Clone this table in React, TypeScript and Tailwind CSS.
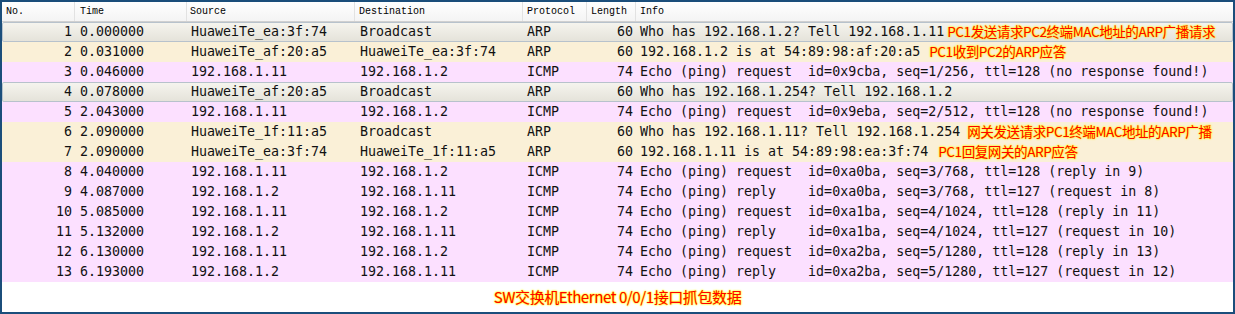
import React from "react";

type Row = {
  no: number;
  time: string;
  src: string;
  dst: string;
  proto: string;
  len: number;
  info: string;
  kind: "sel" | "arp" | "icmp";
  note?: string;
  gap?: string;
};

const rows: Row[] = [
  { no: 1, time: "0.000000", src: "HuaweiTe_ea:3f:74", dst: "Broadcast", proto: "ARP", len: 60, info: "Who has 192.168.1.2? Tell 192.168.1.11", kind: "sel", note: "PC1发送请求PC2终端MAC地址的ARP广播请求", gap: "ml-[3px]" },
  { no: 2, time: "0.031000", src: "HuaweiTe_af:20:a5", dst: "HuaweiTe_ea:3f:74", proto: "ARP", len: 60, info: "192.168.1.2 is at 54:89:98:af:20:a5", kind: "arp", note: "PC1收到PC2的ARP应答", gap: "ml-[9px]" },
  { no: 3, time: "0.046000", src: "192.168.1.11", dst: "192.168.1.2", proto: "ICMP", len: 74, info: "Echo (ping) request  id=0x9cba, seq=1/256, ttl=128 (no response found!)", kind: "icmp" },
  { no: 4, time: "0.078000", src: "HuaweiTe_af:20:a5", dst: "Broadcast", proto: "ARP", len: 60, info: "Who has 192.168.1.254? Tell 192.168.1.2", kind: "sel" },
  { no: 5, time: "2.043000", src: "192.168.1.11", dst: "192.168.1.2", proto: "ICMP", len: 74, info: "Echo (ping) request  id=0x9eba, seq=2/512, ttl=128 (no response found!)", kind: "icmp" },
  { no: 6, time: "2.090000", src: "HuaweiTe_1f:11:a5", dst: "Broadcast", proto: "ARP", len: 60, info: "Who has 192.168.1.11? Tell 192.168.1.254", kind: "arp", note: "网关发送请求PC1终端MAC地址的ARP广播", gap: "ml-[7px]" },
  { no: 7, time: "2.090000", src: "HuaweiTe_ea:3f:74", dst: "HuaweiTe_1f:11:a5", proto: "ARP", len: 60, info: "192.168.1.11 is at 54:89:98:ea:3f:74", kind: "arp", note: "PC1回复网关的ARP应答", gap: "ml-[10px]" },
  { no: 8, time: "4.040000", src: "192.168.1.11", dst: "192.168.1.2", proto: "ICMP", len: 74, info: "Echo (ping) request  id=0xa0ba, seq=3/768, ttl=128 (reply in 9)", kind: "icmp" },
  { no: 9, time: "4.087000", src: "192.168.1.2", dst: "192.168.1.11", proto: "ICMP", len: 74, info: "Echo (ping) reply    id=0xa0ba, seq=3/768, ttl=127 (request in 8)", kind: "icmp" },
  { no: 10, time: "5.085000", src: "192.168.1.11", dst: "192.168.1.2", proto: "ICMP", len: 74, info: "Echo (ping) request  id=0xa1ba, seq=4/1024, ttl=128 (reply in 11)", kind: "icmp" },
  { no: 11, time: "5.132000", src: "192.168.1.2", dst: "192.168.1.11", proto: "ICMP", len: 74, info: "Echo (ping) reply    id=0xa1ba, seq=4/1024, ttl=127 (request in 10)", kind: "icmp" },
  { no: 12, time: "6.130000", src: "192.168.1.11", dst: "192.168.1.2", proto: "ICMP", len: 74, info: "Echo (ping) request  id=0xa2ba, seq=5/1280, ttl=128 (reply in 13)", kind: "icmp" },
  { no: 13, time: "6.193000", src: "192.168.1.2", dst: "192.168.1.11", proto: "ICMP", len: 74, info: "Echo (ping) reply    id=0xa2ba, seq=5/1280, ttl=127 (request in 12)", kind: "icmp" },
];

const rowBg = {
  sel: "bg-gradient-to-b from-[#f6f5ef] to-[#e4e2d9] rounded-[2px] shadow-[inset_0_0_0_1px_#b7c2cc]",
  arp: "bg-[#faf0d7]",
  icmp: "bg-[#fce0ff]",
};

const noteCls =
  "font-['Noto_Sans_CJK_SC',sans-serif] leading-none tracking-[-0.4px] text-[#ff0000] [text-shadow:0_0_2px_#ffff00,0_0_2px_#ffff00,0_0_1px_#ffff00]";

const Header = () => (
  <div className="flex h-[20px] items-center bg-gradient-to-b from-white to-[#f4f4f4] border-b border-[#d0d0d0] font-['Liberation_Mono',monospace] text-[10px] text-black">
    <div className="w-[73px] shrink-0 pl-[4px] border-r border-[#e2e2e2] h-full flex items-center">No.</div>
    <div className="w-[112px] shrink-0 pl-[5px] border-r border-[#e2e2e2] h-full flex items-center">Time</div>
    <div className="w-[168px] shrink-0 pl-[3px] border-r border-[#e2e2e2] h-full flex items-center">Source</div>
    <div className="w-[168px] shrink-0 pl-[4px] border-r border-[#e2e2e2] h-full flex items-center">Destination</div>
    <div className="w-[64px] shrink-0 pl-[4px] border-r border-[#e2e2e2] h-full flex items-center">Protocol</div>
    <div className="w-[49px] shrink-0 pl-[4px] border-r border-[#e2e2e2] h-full flex items-center">Length</div>
    <div className="flex-1 pl-[4px] h-full flex items-center">Info</div>
  </div>
);

export default function App() {
  return (
    <div className="w-[1235px] h-[314px] border-2 border-[#1b4e7b] bg-white flex flex-col overflow-hidden">
      <Header />
      <div className="flex flex-col font-['DejaVu_Sans_Mono',monospace] text-[13.3px] text-[#111]">
        {rows.map((r) => (
          <div key={r.no} className={`flex h-[20px] items-center whitespace-pre ${rowBg[r.kind]}`}>
            <div className="w-[73px] shrink-0 pr-[3px] text-right">{r.no}</div>
            <div className="w-[112px] shrink-0 pl-[5px]">{r.time}</div>
            <div className="w-[168px] shrink-0 pl-[4px]">{r.src}</div>
            <div className="w-[168px] shrink-0 pl-[5px]">{r.dst}</div>
            <div className="w-[64px] shrink-0 pl-[4px]">{r.proto}</div>
            <div className="w-[49px] shrink-0 pr-[3px] text-right">{r.len}</div>
            <div className="flex-1 min-w-0 pl-[4px] flex items-center">
              <span>{r.info}</span>
              {r.note && <span className={`${noteCls} text-[13.5px] ${r.gap}`}>{r.note}</span>}
            </div>
          </div>
        ))}
      </div>
      <div className="flex-1 flex items-center justify-center pb-[2px]">
        <span className={`${noteCls} text-[15px]`}>SW交换机Ethernet 0/0/1接口抓包数据</span>
      </div>
    </div>
  );
}
